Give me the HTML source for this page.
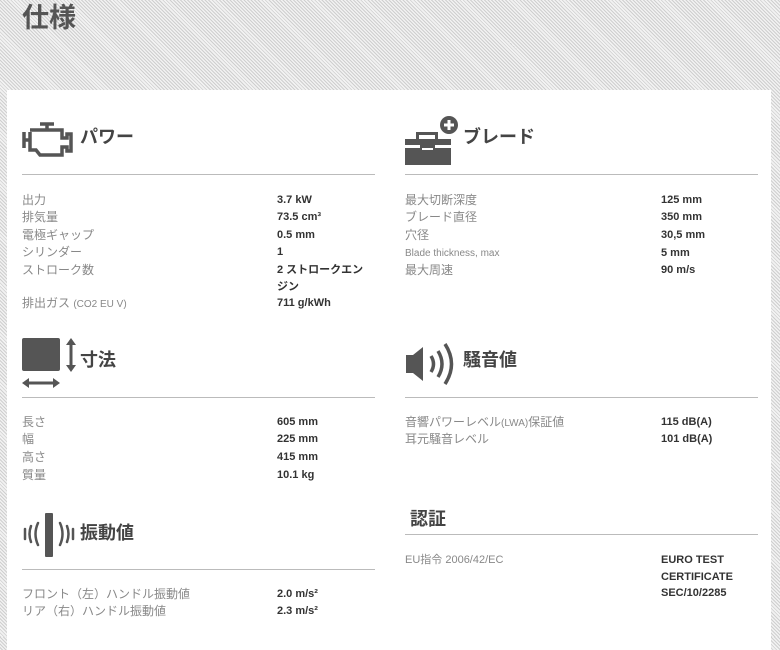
<!DOCTYPE html>
<html><head><meta charset="utf-8"><style>
*{margin:0;padding:0;box-sizing:border-box}
body{width:780px;height:637px;overflow:hidden;position:relative;font-family:"Liberation Sans","Noto Sans CJK JP",sans-serif;
background:#fff repeating-linear-gradient(45deg,#cfcfcf 0 1px,#f2f2f2 1px 2.5px);}
.t{position:absolute;left:22px;top:0;font-size:27px;font-weight:bold;color:#555;line-height:36px}
.panel{position:absolute;left:7px;top:90px;width:764px;height:560px;background:#fff}
.a{position:absolute}
.h{position:absolute;font-size:18px;font-weight:bold;color:#444;line-height:22px}
.ln{position:absolute;height:1px;background:#bbb}
.l{position:absolute;font-size:12px;color:#888;line-height:17px;white-space:nowrap}
.v{position:absolute;font-size:11px;font-weight:bold;color:#333;line-height:17px}
.s{font-size:10px}
</style></head><body>
<div class="t">仕様</div>
<div class="panel"></div>

<svg class="a" style="left:22px;top:122px" width="52" height="36" viewBox="0 0 52 36"><g fill="none" stroke="#555" stroke-width="3.5"><path d="M2 10v16M2 18h6M8 10v18h6l4 5h22v-8h5v4h4V12h-4v4h-5V8H8"/><path d="M18 2h14M25 2v6"/></g></svg>
<div class="h" style="left:80px;top:126px">パワー</div>
<div class="ln" style="left:22px;top:174px;width:353px"></div>
<div class="l" style="left:22px;top:192px">出力</div><div class="v" style="left:277px;top:192px">3.7 kW</div>
<div class="l" style="left:22px;top:209px">排気量</div><div class="v" style="left:277px;top:209px">73.5 cm³</div>
<div class="l" style="left:22px;top:227px">電極ギャップ</div><div class="v" style="left:277px;top:227px">0.5 mm</div>
<div class="l" style="left:22px;top:244px">シリンダー</div><div class="v" style="left:277px;top:244px">1</div>
<div class="l" style="left:22px;top:262px">ストローク数</div><div class="v" style="left:277px;top:262px;width:95px">2 ストロークエンジン</div>
<div class="l" style="left:22px;top:295px">排出ガス <span class="s">(CO2 EU V)</span></div><div class="v" style="left:277px;top:295px">711 g/kWh</div>

<svg class="a" style="left:405px;top:114px" width="56" height="54" viewBox="0 0 56 54"><circle cx="44" cy="11" r="9" fill="#555"/><path d="M44 6v10M39 11h10" stroke="#fff" stroke-width="3"/><rect x="11" y="18" width="22" height="3" fill="#555"/><rect x="11" y="18" width="3" height="9" fill="#555"/><rect x="30" y="18" width="3" height="9" fill="#555"/><rect x="0" y="25" width="46" height="6" fill="#555"/><rect x="0" y="34" width="46" height="17" fill="#555"/><rect x="15" y="31" width="15" height="6" fill="#555"/><rect x="17" y="34" width="11" height="2" fill="#fff"/></svg>
<div class="h" style="left:463px;top:126px">ブレード</div>
<div class="ln" style="left:405px;top:174px;width:353px"></div>
<div class="l" style="left:405px;top:192px">最大切断深度</div><div class="v" style="left:661px;top:192px">125 mm</div>
<div class="l" style="left:405px;top:209px">ブレード直径</div><div class="v" style="left:661px;top:209px">350 mm</div>
<div class="l" style="left:405px;top:227px">穴径</div><div class="v" style="left:661px;top:227px">30,5 mm</div>
<div class="l s" style="left:405px;top:245px">Blade thickness, max</div><div class="v" style="left:661px;top:245px">5 mm</div>
<div class="l" style="left:405px;top:262px">最大周速</div><div class="v" style="left:661px;top:262px">90 m/s</div>

<svg class="a" style="left:22px;top:338px" width="56" height="52" viewBox="0 0 56 52"><rect x="0" y="0" width="38" height="33" rx="2" fill="#555"/><path d="M49 0l-5 7h3.5v20H44l5 7 5-7h-3.5V7H54z" fill="#555"/><path d="M0 45l7-5v3.5h24V40l7 5-7 5v-3.5H7V50z" fill="#555"/></svg>
<div class="h" style="left:80px;top:349px">寸法</div>
<div class="ln" style="left:22px;top:397px;width:353px"></div>
<div class="l" style="left:22px;top:414px">長さ</div><div class="v" style="left:277px;top:414px">605 mm</div>
<div class="l" style="left:22px;top:431px">幅</div><div class="v" style="left:277px;top:431px">225 mm</div>
<div class="l" style="left:22px;top:449px">高さ</div><div class="v" style="left:277px;top:449px">415 mm</div>
<div class="l" style="left:22px;top:467px">質量</div><div class="v" style="left:277px;top:467px">10.1 kg</div>

<svg class="a" style="left:22px;top:513px" width="56" height="44" viewBox="0 0 56 44"><rect x="23" y="0" width="8" height="44" rx="1" fill="#555"/><g fill="none" stroke="#555" stroke-width="2.5" stroke-linecap="round"><path d="M3 16v10M9 13q-3 8 0 16M16 10q-5 11 0 22M38 10q5 11 0 22M45 13q3 8 0 16M51 16v10"/></g></svg>
<div class="h" style="left:80px;top:522px">振動値</div>
<div class="ln" style="left:22px;top:569px;width:353px"></div>
<div class="l" style="left:22px;top:586px">フロント（左）ハンドル振動値</div><div class="v" style="left:277px;top:586px">2.0 m/s²</div>
<div class="l" style="left:22px;top:603px">リア（右）ハンドル振動値</div><div class="v" style="left:277px;top:603px">2.3 m/s²</div>

<svg class="a" style="left:405px;top:341px" width="56" height="46" viewBox="0 0 56 46"><path d="M1 14h7l10-8v34l-10-8H1z" fill="#555"/><g fill="none" stroke="#555" stroke-width="3.5"><path d="M26 15q5 8 0 16M33 10q8 13 0 26M40 3q13 20 0 40"/></g></svg>
<div class="h" style="left:463px;top:349px">騒音値</div>
<div class="ln" style="left:405px;top:397px;width:353px"></div>
<div class="l" style="left:405px;top:414px">音響パワーレベル<span class="s">(LWA)</span>保証値</div><div class="v" style="left:661px;top:414px">115 dB(A)</div>
<div class="l" style="left:405px;top:431px">耳元騒音レベル</div><div class="v" style="left:661px;top:431px">101 dB(A)</div>

<div class="h" style="left:410px;top:508px">認証</div>
<div class="ln" style="left:405px;top:534px;width:353px"></div>
<div class="l s" style="left:405px;top:552px;font-size:11px">EU指令 2006/42/EC</div>
<div class="v" style="left:661px;top:552px;line-height:16.5px">EURO TEST<br>CERTIFICATE<br>SEC/10/2285</div>
</body></html>
